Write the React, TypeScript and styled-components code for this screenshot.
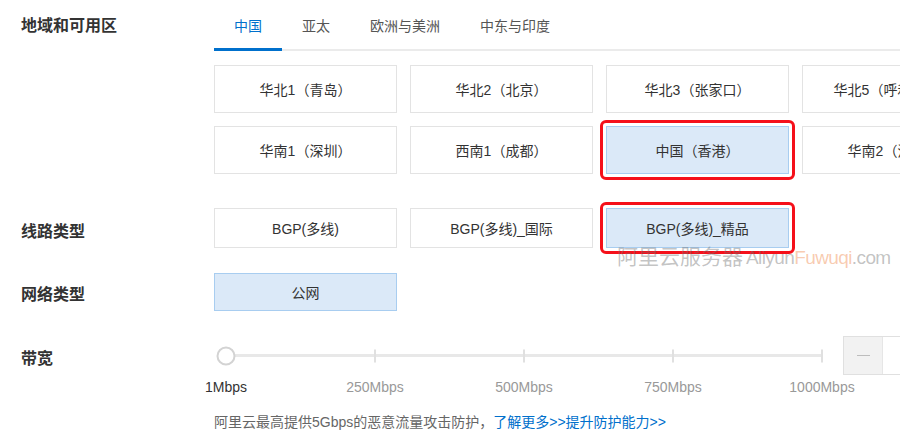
import React from "react";
import styled, { createGlobalStyle } from "styled-components";

const GlobalStyle = createGlobalStyle`
  html, body {
    margin: 0;
    padding: 0;
    background: #fff;
  }
  body {
    font-family: "Liberation Sans", "Noto Sans CJK SC", sans-serif;
  }
`;

const TABS = ["中国", "亚太", "欧洲与美洲", "中东与印度"];

const REGIONS = [
  "华北1（青岛）",
  "华北2（北京）",
  "华北3（张家口）",
  "华北5（呼和浩特）",
  "华南1（深圳）",
  "西南1（成都）",
  "中国（香港）",
  "华南2（河源）",
];

const LINES = ["BGP(多线)", "BGP(多线)_国际", "BGP(多线)_精品"];

const MARKS = [
  { value: 0, label: "1Mbps" },
  { value: 0.25, label: "250Mbps" },
  { value: 0.5, label: "500Mbps" },
  { value: 0.75, label: "750Mbps" },
  { value: 1, label: "1000Mbps" },
];

const App: React.FC = () => {
  return (
    <>
      <GlobalStyle />
      <Page>
        <Row>
          <Label $lh={52} $shift={0}>地域和可用区</Label>
          <Content>
            <TabBar>
              {TABS.map((t, i) => (
                <Tab key={t} $active={i === 0}>
                  {t}
                </Tab>
              ))}
            </TabBar>
            <OptionGrid $top={14} $rowH={48}>
              {REGIONS.map(r => (
                <Option key={r} $selected={r === "中国（香港）"} $mark={r === "中国（香港）"}>
                  {r}
                </Option>
              ))}
            </OptionGrid>
          </Content>
        </Row>

        <Row $top={34}>
          <Label $lh={40} $shift={4}>线路类型</Label>
          <Content>
            <OptionGrid $top={0} $rowH={40}>
              {LINES.map((l, i) => (
                <Option key={l} $selected={i === 2} $mark={i === 2}>
                  {l}
                </Option>
              ))}
            </OptionGrid>
          </Content>
        </Row>

        <Row $top={25}>
          <Label $lh={38} $shift={3}>网络类型</Label>
          <Content>
            <OptionGrid $top={0} $rowH={38}>
              <Option $selected>公网</Option>
            </OptionGrid>
          </Content>
        </Row>

        <Row $top={25}>
          <Label $lh={39} $shift={3}>带宽</Label>
          <Content>
            <SliderLine>
              <SliderBox>
                <Track>
                  {MARKS.slice(1).map(m => (
                    <Tick key={m.label} style={{ left: `${m.value * 100}%` }} />
                  ))}
                  <Handle />
                </Track>
              </SliderBox>
              <Stepper>
                <StepButton>
                  <Minus />
                </StepButton>
                <StepValue />
              </Stepper>
            </SliderLine>
            <ScaleBox>
              <Scale>
                {MARKS.map((m, i) => (
                  <ScaleLabel key={m.label} $current={i === 0} style={{ left: `${m.value * 100}%` }}>
                    {m.label}
                  </ScaleLabel>
                ))}
              </Scale>
            </ScaleBox>
            <Note>
              阿里云最高提供5Gbps的恶意流量攻击防护，
              <NoteLink>了解更多&gt;&gt;提升防护能力&gt;&gt;</NoteLink>
            </Note>
          </Content>
        </Row>

        <Watermark>
          阿里云服务器<WatermarkLatin>Aliyun<WatermarkAccent>Fuwuqi</WatermarkAccent>.com</WatermarkLatin>
        </Watermark>
      </Page>
    </>
  );
};

export default App;

const Page = styled.div`
  position: relative;
  width: 900px;
  height: 441px;
  overflow: hidden;
  background: #fff;
  color: #333;
  font-size: 14px;
`;

const Row = styled.div<{ $top?: number }>`
  display: grid;
  grid-template-columns: 214px 1fr;
  align-items: start;
  margin-top: ${({ $top }) => $top ?? 0}px;
`;

// label text sits a few px below the centre of its options; the negative
// margin keeps that shift from growing the row
const Label = styled.div<{ $lh: number; $shift: number }>`
  padding-left: 21px;
  padding-top: ${({ $shift }) => $shift}px;
  margin-bottom: ${({ $shift }) => -$shift}px;
  font-size: 16px;
  font-weight: 700;
  line-height: ${({ $lh }) => $lh}px;
  color: #333;
  white-space: nowrap;
`;

const Content = styled.div`
  min-width: 0;
`;

const TabBar = styled.div`
  display: flex;
  align-items: flex-start;
  height: 49px;
  border-bottom: 2px solid #ebebeb;
`;

const Tab = styled.div<{ $active: boolean }>`
  box-sizing: border-box;
  height: 51px;
  padding: 5px 20px 0;
  line-height: 43px;
  font-size: 14px;
  white-space: nowrap;
  color: ${({ $active }) => ($active ? "#0070cc" : "#555")};
  border-bottom: 3px solid ${({ $active }) => ($active ? "#0070cc" : "transparent")};
`;

const OptionGrid = styled.div<{ $top: number; $rowH: number }>`
  display: grid;
  grid-template-columns: repeat(4, 183px);
  grid-auto-rows: ${({ $rowH }) => $rowH}px;
  gap: 13px;
  margin-top: ${({ $top }) => $top}px;
`;

const Option = styled.div<{ $selected?: boolean; $mark?: boolean }>`
  position: relative;
  display: flex;
  align-items: center;
  justify-content: center;
  box-sizing: border-box;
  border: 1px solid ${({ $selected }) => ($selected ? "#a8cdf0" : "#e3e3e3")};
  background: ${({ $selected }) => ($selected ? "#dbe9f8" : "#fff")};
  color: #333;
  font-size: 14px;
  white-space: nowrap;

  &::after {
    content: "";
    display: ${({ $mark }) => ($mark ? "block" : "none")};
    position: absolute;
    inset: -7px;
    border: 3px solid #f5101a;
    border-radius: 6px;
    pointer-events: none;
    z-index: 1;
  }
`;

const SliderLine = styled.div`
  display: flex;
  align-items: center;
  height: 39px;
`;

const SliderBox = styled.div`
  box-sizing: border-box;
  width: 620px;
  flex: none;
  padding: 0 12px;
`;

const Track = styled.div`
  position: relative;
  height: 3px;
  background: #e8e8e8;
`;

const Tick = styled.span`
  position: absolute;
  top: 50%;
  width: 2px;
  height: 13px;
  background: #e0e0e0;
  transform: translate(-50%, -50%);
`;

const Handle = styled.span`
  position: absolute;
  left: 0;
  top: 50%;
  box-sizing: border-box;
  width: 19px;
  height: 19px;
  border-radius: 50%;
  border: 2px solid #d3d3d3;
  background: #fff;
  transform: translate(-50%, -50%);
`;

const Stepper = styled.div`
  display: flex;
  flex: none;
  box-sizing: border-box;
  margin-left: 9px;
  width: 120px;
  height: 39px;
  border: 1px solid #e0e0e0;
`;

const StepButton = styled.div`
  display: flex;
  align-items: center;
  justify-content: center;
  width: 38px;
  background: #f2f2f2;
  border-right: 1px solid #e6e6e6;
`;

const Minus = styled.span`
  width: 13px;
  height: 1px;
  background: #bdbdbd;
`;

const StepValue = styled.div`
  flex: 1;
  background: #fff;
`;

const ScaleBox = styled.div`
  box-sizing: border-box;
  width: 620px;
  padding: 0 12px;
  margin-top: 2px;
`;

const Scale = styled.div`
  position: relative;
  height: 20px;
`;

const ScaleLabel = styled.span<{ $current: boolean }>`
  position: absolute;
  top: 0;
  line-height: 20px;
  font-size: 14px;
  white-space: nowrap;
  color: ${({ $current }) => ($current ? "#333" : "#999")};
  transform: translateX(-50%);
`;

const Note = styled.div`
  margin-top: 15px;
  font-size: 14px;
  line-height: 20px;
  color: #666;
  white-space: nowrap;
`;

const NoteLink = styled.span`
  color: #0070cc;
`;

const Watermark = styled.div`
  position: absolute;
  left: 617px;
  top: 243px;
  z-index: 2;
  font-size: 21px;
  line-height: 28px;
  color: rgba(110, 110, 110, 0.42);
  white-space: nowrap;
  pointer-events: none;
`;

const WatermarkLatin = styled.span`
  margin-left: 3px;
  font-size: 19px;
  letter-spacing: -0.6px;
`;

const WatermarkAccent = styled.span`
  color: rgba(240, 140, 80, 0.45);
`;
